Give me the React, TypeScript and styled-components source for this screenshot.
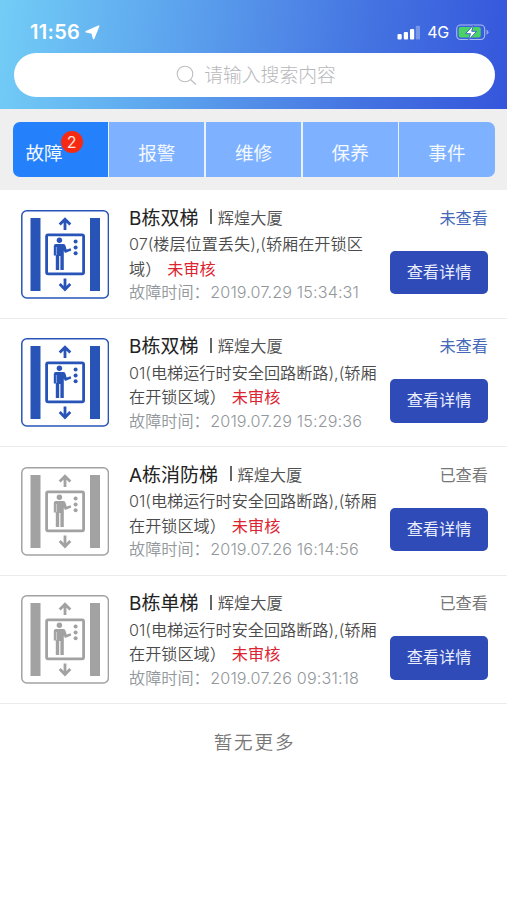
import React from "react";
import styled, { createGlobalStyle } from "styled-components";

const GlobalStyle = createGlobalStyle`
  * { box-sizing: border-box; }
  body {
    margin: 0;
    background: #fff;
    font-family: Inter, "Noto Sans CJK SC", sans-serif;
    -webkit-font-smoothing: antialiased;
  }
`;

const Screen = styled.div`
  width: 507px;
  height: 900px;
  overflow: hidden;
  background: #fff;
`;

const Header = styled.header`
  height: 109px;
  background: linear-gradient(97deg, #72cdf6 0%, #5fa9ef 30%, #5089e7 55%, #4473e1 72%, #3556dc 100%);
`;

const StatusBar = styled.div`
  display: flex;
  align-items: center;
  justify-content: space-between;
  height: 53px;
  padding: 11px 18px 0 30px;
  color: #fff;
`;

const StatusGroup = styled.div<{ $gap: number }>`
  display: flex;
  align-items: center;
  gap: ${(p) => p.$gap}px;
`;

const Clock = styled.span`
  font-size: 20px;
  font-weight: 600;
  line-height: 24px;
  letter-spacing: 0.3px;
`;

const Network = styled.span`
  font-size: 16px;
  line-height: 20px;
  letter-spacing: -0.3px;
`;

const SearchBox = styled.div`
  display: flex;
  align-items: center;
  justify-content: center;
  gap: 7px;
  height: 44px;
  margin: 0 12px 0 14px;
  padding: 1px 0 0 3px;
  border-radius: 22px;
  background: #fff;
  color: #b8b8bc;
  font-size: 18.8px;
  font-weight: 300;
  line-height: 44px;
`;

const TabArea = styled.div`
  height: 81px;
  padding: 13px 12.5px 0;
  background: #efefef;
`;

const Tabs = styled.nav`
  display: grid;
  grid-template-columns: repeat(5, 1fr);
  height: 54.5px;
  gap: 1.6px;
  overflow: hidden;
  border-radius: 7px;
  background: #e8f3fd;
`;

const Tab = styled.div<{ $active?: boolean }>`
  display: flex;
  align-items: center;
  justify-content: ${(p) => (p.$active ? "flex-start" : "center")};
  padding: 7px 0 0 ${(p) => (p.$active ? "13px" : "0")};
  background: ${(p) => (p.$active ? "#2581fb" : "#7eb1ff")};
  color: #f4f9ff;
  font-size: 18.6px;
  line-height: 26px;
`;

const Badge = styled.span`
  width: 22px;
  height: 22px;
  margin: -22px 0 0 -2px;
  border-radius: 50%;
  background: #f62a12;
  color: #ffe3df;
  font-size: 16px;
  line-height: 22px;
  text-align: center;
`;

const Row = styled.article`
  display: grid;
  grid-template-columns: 88px minmax(0, 1fr) 98px;
  column-gap: 20px;
  height: 128.5px;
  padding: 0 19px 0 21px;
  border-bottom: 1px solid #ececec;
`;

const IconCell = styled.div`
  padding-top: 19.5px;
  svg { display: block; }
`;

const Details = styled.div`
  padding-top: 13px;
  white-space: nowrap;
`;

const Title = styled.div`
  display: flex;
  align-items: center;
  height: 28px;
  padding-bottom: 2px;
  color: #222;
  font-size: 19px;
`;

const Building = styled.span`
  display: flex;
  align-items: center;
  margin-left: 12px;
  padding-top: 1px;
  color: #505050;
  font-size: 16.2px;
  font-weight: 350;

  &::before {
    content: "";
    width: 1.4px;
    height: 15px;
    margin-right: 6px;
    background: #666;
  }
`;

const Line = styled.div`
  height: 24.5px;
  color: #4a4a4a;
  font-size: 16.15px;
  font-weight: 350;
  line-height: 26px;
`;

const Pending = styled.span`
  margin-left: 6px;
  color: #dc2430;
  font-weight: 400;
`;

const Time = styled.div`
  height: 24px;
  color: #92979b;
  font-size: 16.15px;
  font-weight: 350;
  line-height: 25px;
`;

const TimeValue = styled.span`
  margin-left: 0.5px;
  letter-spacing: 0.14px;
`;

const Side = styled.div`
  padding-top: 15.5px;
`;

const State = styled.div<{ $read: boolean }>`
  height: 24px;
  color: ${(p) => (p.$read ? "#777" : "#4568b8")};
  font-size: 16.2px;
  line-height: 24px;
  text-align: right;
`;

const DetailButton = styled.button`
  display: block;
  width: 98px;
  height: 43.5px;
  margin-top: 21px;
  padding: 0;
  border: 0;
  border-radius: 5px;
  background: #2f4bb7;
  color: #e9edfc;
  font: inherit;
  font-size: 16.2px;
  line-height: 43px;
`;

const Footer = styled.div`
  padding-top: 23px;
  color: #777;
  font-size: 18.6px;
  font-weight: 350;
  letter-spacing: 1.8px;
  line-height: 30px;
  text-align: center;
  text-indent: 2px;
`;

function ElevatorIcon({ color }: { color: string }) {
  return (
    <svg width="88" height="89" viewBox="0 0 88 89" fill="none">
      <rect x="0.8" y="0.8" width="86.6" height="87.2" rx="5" stroke={color} strokeWidth="1.5" />
      <path d="M9.5 8h10v73h-10zM69 8h10v73H69z" fill={color} />
      <rect x="25.6" y="24.8" width="37" height="39" rx="1.5" stroke={color} strokeWidth="2.8" />
      <path d="M44 20V9M38.7 14.5 44 9.2l5.3 5.3M44 68.5v11M38.7 74l5.3 5.5 5.3-5.5" stroke={color} strokeWidth="2.8" />
      <circle cx="38.4" cy="30.3" r="2.7" fill={color} />
      <path
        d="M34.8 34h7.6q1.8 0 2.2 2l1 3.6 4-1.4.7 2.2-6.2 2.6-1.3-2.2V60h-3.4V46h-1.2v14h-3.4V45.5h-2V36q0-2 2-2z"
        fill={color}
      />
      <path d="M35.4 37v8" stroke="#fff" strokeWidth="0.5" />
      <circle cx="54.6" cy="31.6" r="2" fill={color} />
      <circle cx="54.6" cy="37.4" r="2" fill={color} />
      <circle cx="54.6" cy="43.2" r="2" fill={color} />
    </svg>
  );
}

interface Fault {
  name: string;
  lines: [string, string];
  time: string;
  read: boolean;
}

const circuit: [string, string] = ["01(电梯运行时安全回路断路),(轿厢", "在开锁区域\uFF09"];

const faults: Fault[] = [
  { name: "B栋双梯", lines: ["07(楼层位置丢失),(轿厢在开锁区", "域\uFF09"], time: "2019.07.29 15:34:31", read: false },
  { name: "B栋双梯", lines: circuit, time: "2019.07.29 15:29:36", read: false },
  { name: "A栋消防梯", lines: circuit, time: "2019.07.26 16:14:56", read: true },
  { name: "B栋单梯", lines: circuit, time: "2019.07.26 09:31:18", read: true },
];

function FaultRow({ fault }: { fault: Fault }) {
  return (
    <Row>
      <IconCell>
        <ElevatorIcon color={fault.read ? "#a2a2a2" : "#2854b8"} />
      </IconCell>
      <Details>
        <Title>
          {fault.name}
          <Building>辉煌大厦</Building>
        </Title>
        <Line>{fault.lines[0]}</Line>
        <Line>
          {fault.lines[1]}
          <Pending>未审核</Pending>
        </Line>
        <Time>
          {"故障时间\uFF1A"}
          <TimeValue>{fault.time}</TimeValue>
        </Time>
      </Details>
      <Side>
        <State $read={fault.read}>{fault.read ? "已查看" : "未查看"}</State>
        <DetailButton>查看详情</DetailButton>
      </Side>
    </Row>
  );
}

export default function App() {
  return (
    <Screen>
      <GlobalStyle />
      <Header>
        <StatusBar>
          <StatusGroup $gap={5}>
            <Clock>11:56</Clock>
            <svg width="15" height="15" viewBox="0 0 15 15">
              <path d="M13.6 1.2 8.6 13.4 7.2 8 1.2 6.8z" fill="#fff" stroke="#fff" strokeWidth="1.6" strokeLinejoin="round" />
            </svg>
          </StatusGroup>
          <StatusGroup $gap={7}>
            <svg width="24" height="15" viewBox="0 0 24 15" fill="#fff">
              <rect x="1.5" y="9" width="4.2" height="5.5" rx="1" />
              <rect x="7.8" y="7" width="4.2" height="7.5" rx="1" />
              <rect x="14" y="4" width="4.2" height="10.5" rx="1" />
              <rect x="19.8" y="0.7" width="4.2" height="13.8" rx="1" opacity=".3" />
            </svg>
            <Network>4G</Network>
            <svg width="33" height="17" viewBox="0 0 33 17">
              <rect x=".7" y="1" width="28" height="14.5" rx="4" fill="none" stroke="#a9bdf2" strokeWidth="1.1" />
              <rect x="2.7" y="3" width="22" height="10.5" rx="2" fill="#4bd264" />
              <path d="M30.5 5.7v5q2-.8 2-2.5t-2-2.5" fill="#8fa8ed" />
              <path d="m17.5 1-8 8.7h5L12.5 16l8.2-8.7h-5z" fill="#fff" stroke="#3f6bc9" strokeWidth="1" />
            </svg>
          </StatusGroup>
        </StatusBar>
        <SearchBox>
          <svg width="21" height="21" viewBox="0 0 21 21" fill="none" stroke="#bdbdc1" strokeWidth="1.1">
            <circle cx="9" cy="9" r="7.8" />
            <path d="m14.5 14.5 5.5 5" />
          </svg>
          请输入搜索内容
        </SearchBox>
      </Header>
      <TabArea>
        <Tabs>
          <Tab $active>
            故障<Badge>2</Badge>
          </Tab>
          <Tab>报警</Tab>
          <Tab>维修</Tab>
          <Tab>保养</Tab>
          <Tab>事件</Tab>
        </Tabs>
      </TabArea>
      {faults.map((fault) => (
        <FaultRow key={fault.time} fault={fault} />
      ))}
      <Footer>暂无更多</Footer>
    </Screen>
  );
}
